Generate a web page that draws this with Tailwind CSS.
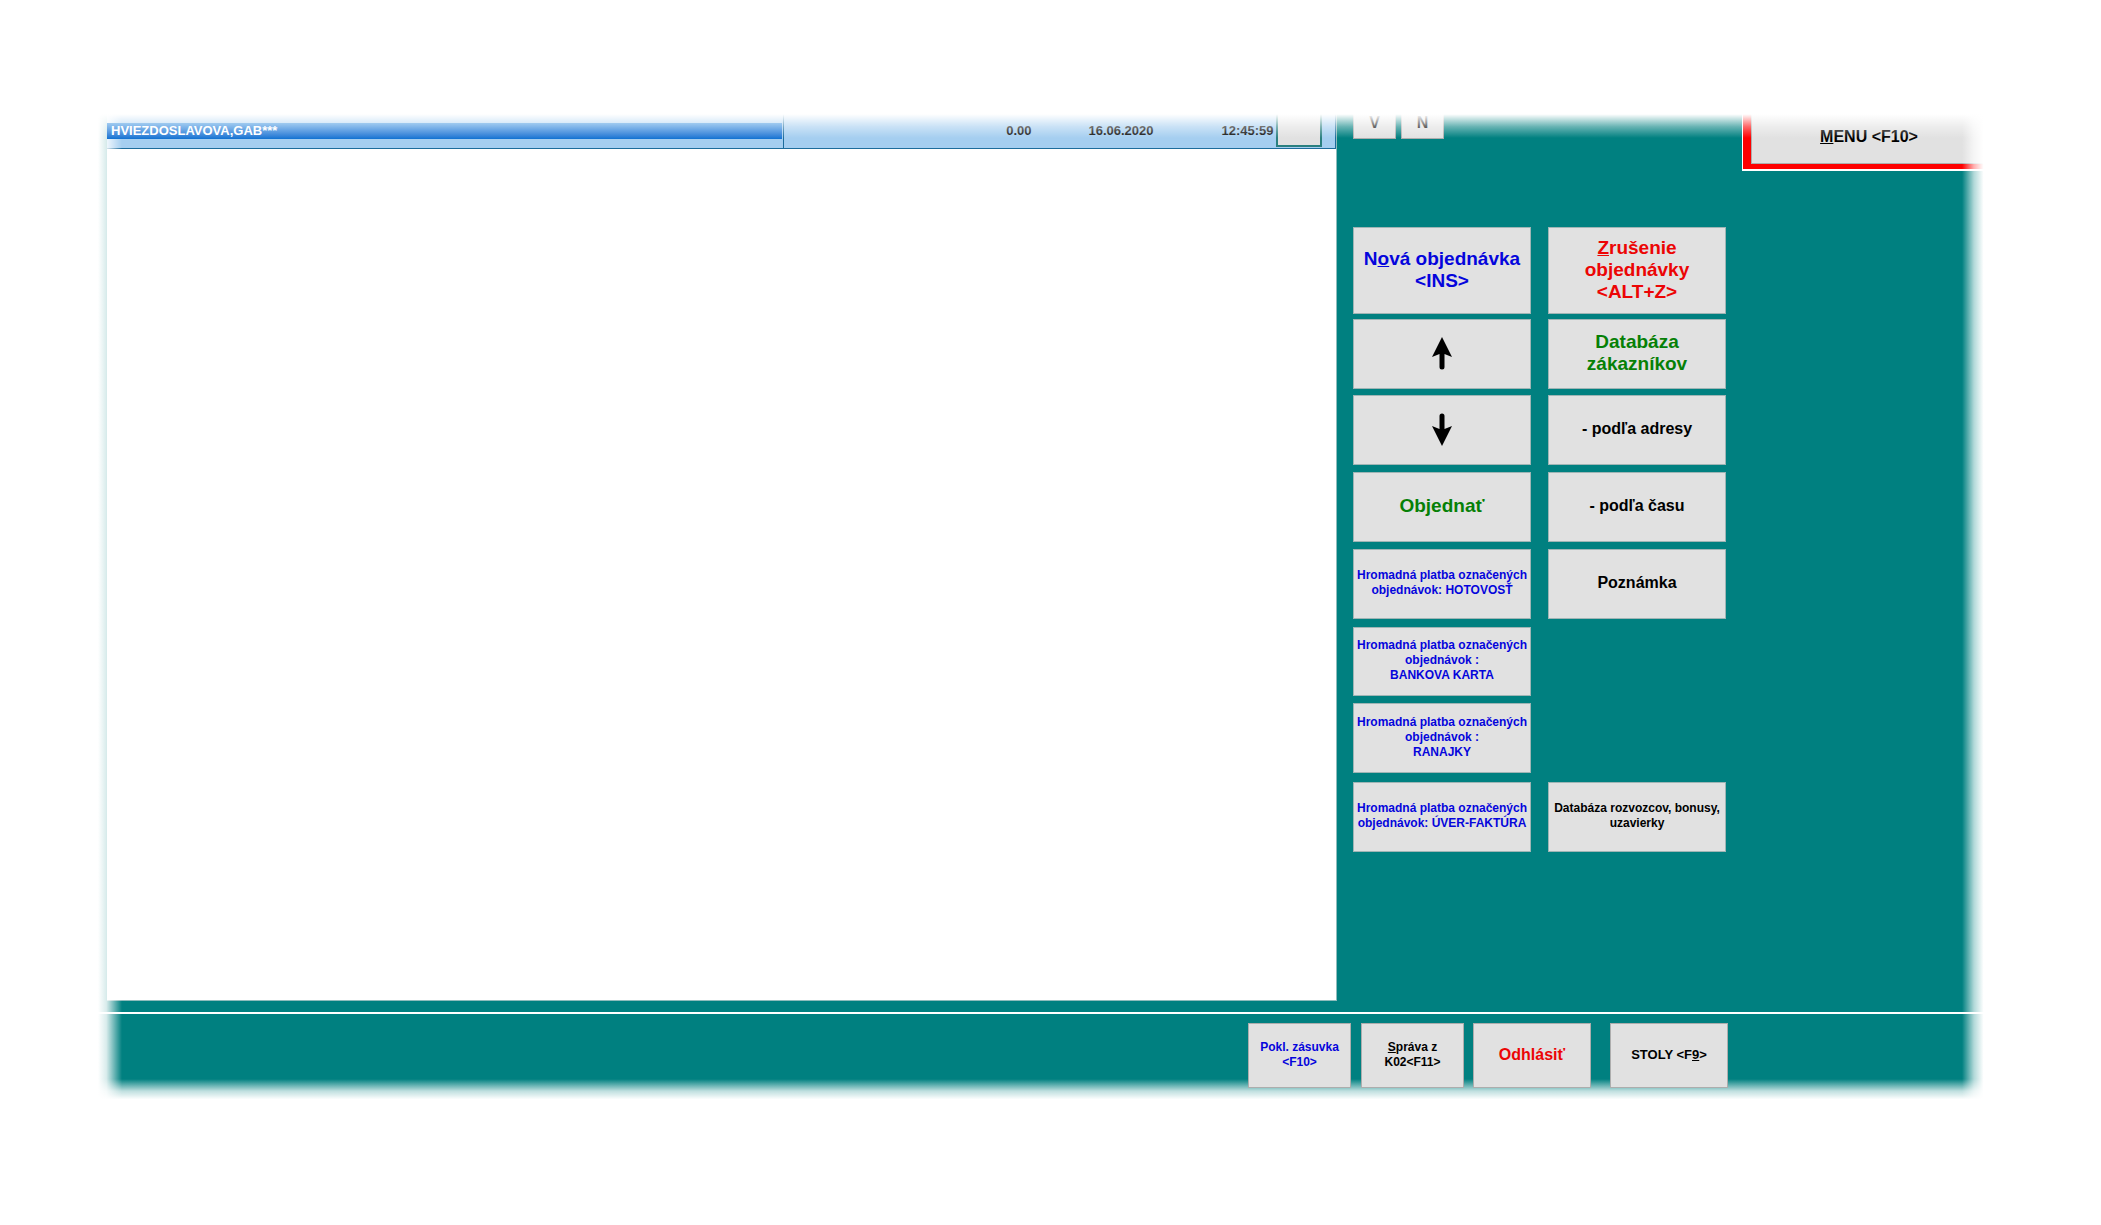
<!DOCTYPE html>
<html lang="sk">
<head>
<meta charset="utf-8">
<title>Objednávky</title>
<script src="https://cdn.jsdelivr.net/npm/@tailwindcss/browser@4"></script>
</head>
<body class="bg-white font-['Liberation_Sans',Arial,sans-serif] font-bold text-black">
<div class="relative mt-[110px] mr-[115px] mb-[122px] ml-[98px] bg-[#008080]">

  <main class="flex min-h-[891px]">
    <section class="ml-[9px] flex-1 border-r border-b border-[#8fbcbc] bg-white pt-[2px]" aria-label="Zoznam objednávok">
      <table class="w-full table-fixed border-collapse text-[13px] leading-4 text-[#101010]">
        <colgroup>
          <col>
          <col class="w-[248px]">
          <col class="w-[122px]">
          <col class="w-[122px]">
          <col class="w-[46px]">
          <col class="w-[14px]">
        </colgroup>
        <tbody>
          <tr class="h-[36px] border-b border-[#1d6c9c] bg-[#a5cef0]">
            <td class="border-r border-[#1d6c9c] p-0 pt-[2px] pr-px">
              <div class="relative z-10 bg-linear-to-b from-[#a0cbf0] to-[#0c72d2] pl-1 text-white">HVIEZDOSLAVOVA,GAB***</div>
            </td>
            <td class="p-0 pt-[2px] text-right">0.00</td>
            <td class="p-0 pt-[2px] text-right">16.06.2020</td>
            <td class="p-0 pt-[2px] pr-[2px] text-right">12:45:59</td>
            <td class="p-0"><button type="button" aria-label="Označiť" class="block h-[35px] w-[46px] border-2 border-[#2a8080] bg-[#e1e1e1]"></button></td>
            <td class="border-r border-[#1d6c9c] p-0"></td>
          </tr>
        </tbody>
      </table>
    </section>

    <section class="flex w-[649px] justify-between pl-4">
      <div>
        <div class="flex h-[117px] gap-[5px] text-base leading-5">
          <button type="button" class="h-[29px] w-[43px] border border-[#adadad] bg-[#e1e1e1] pb-1">V</button>
          <button type="button" class="h-[29px] w-[43px] border border-[#adadad] bg-[#e1e1e1] pb-1">N</button>
        </div>
        <div class="grid grid-cols-[178px_178px] grid-rows-[92px_76px_77px_77px_78px_76px_79px_70px] items-start gap-x-[17px] [&_button]:pb-[2px]">
          <button type="button" class="h-[87px] border border-[#9fb5b5] bg-[#e1e1e1] text-[19px] leading-[22px] text-[#0505dc]">N<u>o</u>vá objednávka<br>&lt;INS&gt;</button>
          <button type="button" class="h-[87px] border border-[#9fb5b5] bg-[#e1e1e1] text-[19px] leading-[22px] text-[#ec0505]"><u>Z</u>rušenie<br>objednávky<br>&lt;ALT+Z&gt;</button>

          <button type="button" aria-label="Hore" class="flex h-[70px] items-center justify-center border border-[#9fb5b5] bg-[#e1e1e1]">
            <svg width="20" height="33" viewBox="0 0 20 33"><path d="M10 0 L20 20 L12.500 17 V30 Q12.500 32.500 10 32.500 Q7.500 32.500 7.500 30 V17 L0 20 Z"/></svg>
          </button>
          <button type="button" class="h-[70px] border border-[#9fb5b5] bg-[#e1e1e1] text-[19px] leading-[22px] text-[#068006]">Databáza<br>zákazníkov</button>

          <button type="button" aria-label="Dole" class="flex h-[70px] items-center justify-center border border-[#9fb5b5] bg-[#e1e1e1]">
            <svg width="20" height="33" viewBox="0 0 20 33"><path d="M10 33 L20 13 L12.500 16 V3 Q12.500 0.500 10 0.500 Q7.500 0.500 7.500 3 V16 L0 13 Z"/></svg>
          </button>
          <button type="button" class="h-[70px] border border-[#9fb5b5] bg-[#e1e1e1] text-base leading-5">- podľa adresy</button>

          <button type="button" class="h-[70px] border border-[#9fb5b5] bg-[#e1e1e1] text-[19px] leading-[22px] text-[#068006]">Objednať</button>
          <button type="button" class="h-[70px] border border-[#9fb5b5] bg-[#e1e1e1] text-base leading-5">- podľa času</button>

          <button type="button" class="h-[70px] border border-[#9fb5b5] bg-[#e1e1e1] text-xs leading-[15px] text-[#0505dc]">Hromadná platba označených<br>objednávok: HOTOVOSŤ</button>
          <button type="button" class="h-[70px] border border-[#9fb5b5] bg-[#e1e1e1] text-base leading-5">Poznámka</button>

          <button type="button" class="col-start-1 h-[69px] border border-[#9fb5b5] bg-[#e1e1e1] text-xs leading-[15px] text-[#0505dc]">Hromadná platba označených<br>objednávok :<br>BANKOVA KARTA</button>
          <button type="button" class="col-start-1 h-[70px] border border-[#9fb5b5] bg-[#e1e1e1] text-xs leading-[15px] text-[#0505dc]">Hromadná platba označených<br>objednávok :<br>RANAJKY</button>
          <button type="button" class="col-start-1 h-[70px] border border-[#9fb5b5] bg-[#e1e1e1] text-xs leading-[15px] text-[#0505dc]">Hromadná platba označených<br>objednávok: ÚVER-FAKTÚRA</button>
          <button type="button" class="h-[70px] border border-[#9fb5b5] bg-[#e1e1e1] text-xs leading-[15px]">Databáza rozvozcov, bonusy,<br>uzavierky</button>
        </div>
      </div>

      <div class="h-[61px] w-[244px] border-b-2 border-l border-white">
        <div class="h-full border-b-[5px] border-l-8 border-[#fe0000]">
          <button type="button" class="h-full w-full border-b border-l border-[#adadad] bg-[#e1e1e1] text-base leading-5"><u>M</u>ENU &lt;F10&gt;</button>
        </div>
      </div>
    </section>
  </main>

  <footer class="mt-[11px] flex h-[91px] justify-end border-t-2 border-white pt-[9px] pr-[258px]">
    <div class="relative z-10 flex h-[65px] [&_button]:pb-[2px]">
      <button type="button" class="mr-[10px] w-[103px] border border-[#adadad] bg-[#e1e1e1] text-xs leading-[15px] text-[#0505dc]">Pokl. zásuvka<br>&lt;F10&gt;</button>
      <button type="button" class="mr-[9px] w-[103px] border border-[#adadad] bg-[#e1e1e1] text-xs leading-[15px]"><u>S</u>práva z<br>K02&lt;F11&gt;</button>
      <button type="button" class="mr-[19px] w-[118px] border border-[#adadad] bg-[#e1e1e1] text-base leading-5 text-[#ec0505]">Odhlásiť</button>
      <button type="button" class="w-[118px] border border-[#adadad] bg-[#e1e1e1] text-[13px] leading-4">STOLY &lt;F<u>9</u>&gt;</button>
    </div>
  </footer>

  <!-- soft edges of the window -->
  <div class="pointer-events-none absolute inset-x-0 top-0 h-[28px] bg-linear-to-b from-white from-15% via-white/40 via-60% to-white/0"></div>
  <div class="pointer-events-none absolute inset-x-0 bottom-0 h-[24px] bg-linear-to-t from-white from-15% via-white/75 via-50% to-white/0"></div>
  <div class="pointer-events-none absolute inset-y-0 left-0 w-[24px] bg-linear-to-r from-white via-white/85 via-35% to-white/0"></div>
  <div class="pointer-events-none absolute inset-y-0 right-0 w-[24px] bg-linear-to-l from-white from-10% via-white/70 via-50% to-white/0"></div>
</div>
</body>
</html>
